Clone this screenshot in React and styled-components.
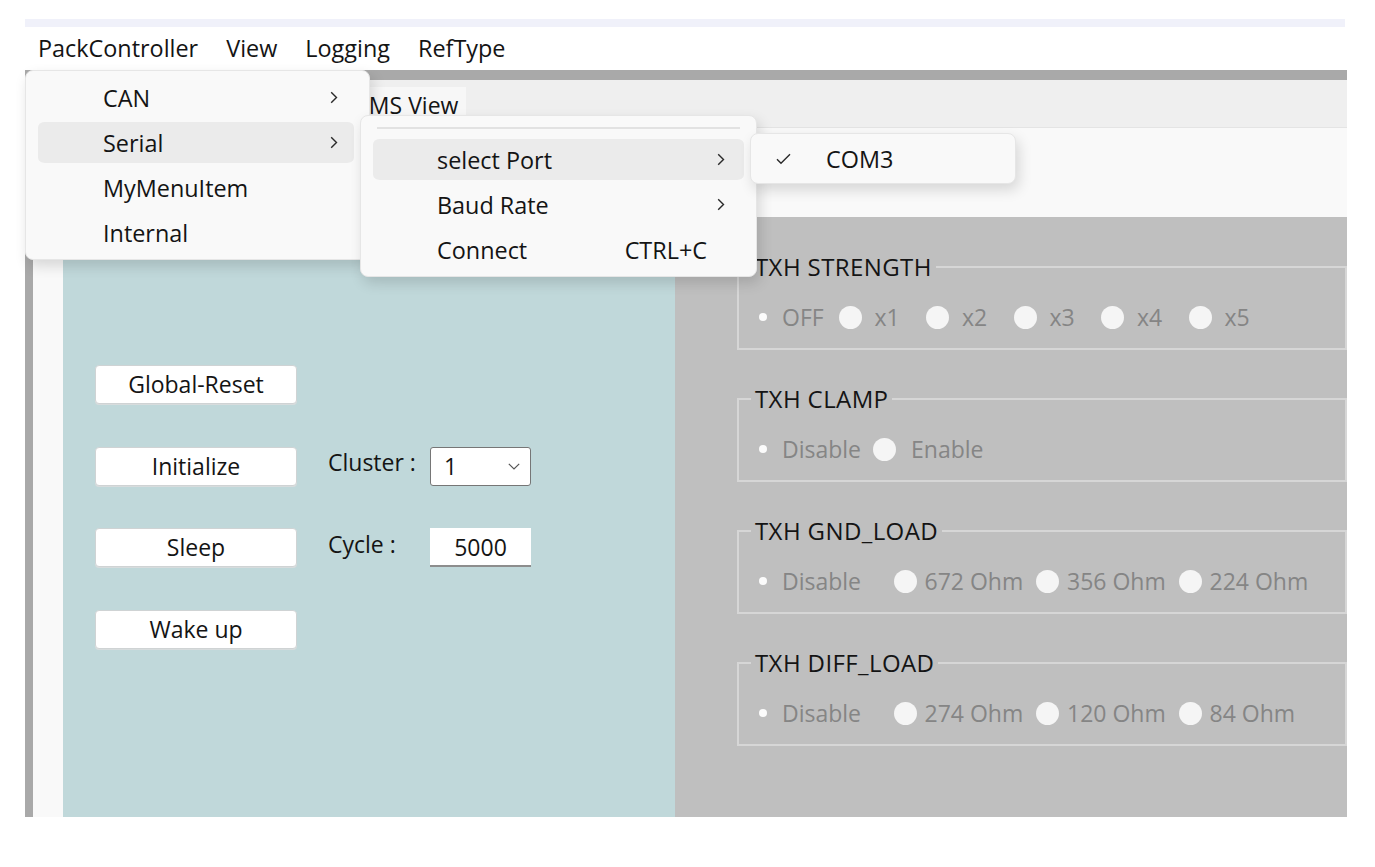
import React from 'react';
import styled, { createGlobalStyle } from 'styled-components';

const GlobalStyle = createGlobalStyle`
  html, body {
    margin: 0;
    padding: 0;
    background: #ffffff;
  }
  body {
    font-family: "Open Sans", "Noto Sans", "Liberation Sans", sans-serif;
    color: #141414;
  }
  * { box-sizing: border-box; }
`;

const Page = styled.div`
  width: 1375px;
  height: 867px;
  padding-top: 19px;
  overflow: hidden;
  background: #fff;
`;

const TopBand = styled.div`
  margin-left: 25px;
  width: 1320px;
  height: 8px;
  background: #f0f1fa;
`;

const Window = styled.div`
  position: relative;
  margin-left: 25px;
  width: 1322px;
`;

const MenuBar = styled.div`
  display: flex;
  align-items: center;
  height: 43px;
  background: #fff;
`;

const MenuTitle = styled.div`
  padding: 0 14px;
  font-size: 23.4px;
  line-height: 43px;
  &:first-child { padding-left: 13px; }
`;

const Frame = styled.div`
  border-top: 10px solid #a9a9a9;
  border-left: 8px solid #a9a9a9;
  background: #f9f9f9;
`;

const TabStrip = styled.div`
  display: flex;
  align-items: flex-end;
  height: 48px;
  padding-left: 315px;
  background: #efefef;
  border-bottom: 1px solid #e4e4e4;
`;

const Tab = styled.div`
  height: 40px;
  padding: 0 8px 0 6px;
  font-size: 23px;
  line-height: 36px;
  background: #f7f7f7;
`;

const TabPage = styled.div`
  padding: 89px 0 0 30px;
  background: #f9f9f9;
`;

const Body = styled.div`
  display: flex;
  height: 600px;
`;

const ControlPanel = styled.div`
  width: 612px;
  background: #c0d8da;
  padding: 148px 0 0 32px;
  display: flex;
  flex-direction: column;
  gap: 42.5px;
`;

const Row = styled.div`
  display: flex;
  align-items: center;
  height: 39px;
`;

const Button = styled.div`
  width: 202px;
  height: 39px;
  background: #fff;
  border: 1px solid #cfd3d4;
  border-radius: 4px;
  box-shadow: 0 1px 0 #d7dcdd;
  font-size: 23px;
  line-height: 36px;
  text-align: center;
`;

const Label = styled.div`
  width: 102px;
  margin-left: 31px;
  font-size: 23px;
  line-height: 30px;
  margin-top: -8px;
`;

const SelectBox = styled.div`
  display: flex;
  align-items: center;
  justify-content: space-between;
  width: 101px;
  height: 39px;
  padding: 0 10px 0 13px;
  background: #fff;
  border: 1px solid #767676;
  border-radius: 3px;
  font-size: 23px;
`;

const InputBox = styled.div`
  width: 101px;
  height: 39px;
  background: #fff;
  border-bottom: 2px solid #8d8d8d;
  font-size: 23px;
  line-height: 38px;
  text-align: center;
`;

const SettingsPanel = styled.div`
  flex: 1;
  background: #bfbfbf;
  padding: 35px 0 0 62px;
  overflow: hidden;
`;

const Group = styled.fieldset`
  margin: 0 0 34px 0;
  min-width: 0;
  padding: 22px 0 18px 12px;
  border: 2px solid #d6d6d6;
`;

const Legend = styled.legend`
  padding: 0 4px;
  font-size: 24px;
  line-height: 30px;
  letter-spacing: 0.4px;
  color: #141414;
`;

const Options = styled.div`
  display: flex;
  height: 26px;
`;

const Radio = styled.div`
  display: flex;
  align-items: center;
  flex: none;
  width: ${p => p.$width}px;
  font-size: 23px;
  color: #858585;
  white-space: nowrap;
`;

const Circle = styled.span`
  flex: none;
  display: flex;
  align-items: center;
  justify-content: center;
  width: 23px;
  height: 23px;
  margin-right: ${p => p.$gap}px;
  border-radius: 50%;
  background: ${p => (p.$checked ? 'transparent' : '#f5f5f5')};
  &::after {
    content: '';
    display: ${p => (p.$checked ? 'block' : 'none')};
    width: 8px;
    height: 8px;
    border-radius: 50%;
    background: #fbfbfb;
  }
`;

/* dropdown menus, drawn over the window */

const Dropdown = styled.div`
  position: absolute;
  left: ${p => p.$left}px;
  top: ${p => p.$top}px;
  width: ${p => p.$width}px;
  padding: ${p => p.$pad};
  background: #f9f9f9;
  border: 1px solid #e6e6e6;
  border-radius: 8px;
  box-shadow: 3px 6px 14px rgba(0, 0, 0, 0.14);
  z-index: ${p => p.$z};
`;

const MenuRule = styled.div`
  height: 2px;
  margin: 0 4px 8px;
  background: #e2e2e2;
`;

const MenuItem = styled.div`
  display: flex;
  align-items: center;
  height: 45px;
  padding: ${p => p.$pad};
  border-top: 2px solid transparent;
  border-bottom: 2px solid transparent;
  border-radius: 7px;
  background: ${p => (p.$active ? '#ebebeb' : 'transparent')};
  background-clip: padding-box;
  font-size: 23.4px;
  color: #141414;
`;

const ItemText = styled.span`
  flex: 1;
`;

const Shortcut = styled.span`
  margin-right: 7px;
`;

const Arrow = styled.span`
  display: flex;
  justify-content: center;
  width: 14px;
`;

const Check = styled.span`
  display: flex;
  width: 69px;
  padding-left: 19px;
`;

const Chevron = () => (
  <svg width="8" height="13" viewBox="0 0 8 13">
    <path d="M1.2 1.2 L6.5 6.5 L1.2 11.8" fill="none" stroke="#2a2a2a" strokeWidth="1.4" />
  </svg>
);

const DownChevron = () => (
  <svg width="12" height="7" viewBox="0 0 12 7">
    <path d="M0.8 0.8 L6 6 L11.2 0.8" fill="none" stroke="#555" strokeWidth="1.2" />
  </svg>
);

const Tick = () => (
  <svg width="15" height="12" viewBox="0 0 15 12">
    <path d="M1 6.3 L5 10.3 L14 1.2" fill="none" stroke="#2a2a2a" strokeWidth="1.4" />
  </svg>
);

const groups = [
  { title: 'TXH STRENGTH', width: 87.5, gap: 13, options: ['OFF', 'x1', 'x2', 'x3', 'x4', 'x5'] },
  { title: 'TXH CLAMP', width: 122, gap: 15, options: ['Disable', 'Enable'] },
  { title: 'TXH GND_LOAD', width: 142.5, gap: 8, options: ['Disable', '672 Ohm', '356 Ohm', '224 Ohm'] },
  { title: 'TXH DIFF_LOAD', width: 142.5, gap: 8, options: ['Disable', '274 Ohm', '120 Ohm', '84 Ohm'] },
];

export default function App() {
  return (
    <Page>
      <GlobalStyle />
      <TopBand />
      <Window>
        <MenuBar>
          <MenuTitle>PackController</MenuTitle>
          <MenuTitle>View</MenuTitle>
          <MenuTitle>Logging</MenuTitle>
          <MenuTitle>RefType</MenuTitle>
        </MenuBar>

        <Frame>
          <TabStrip>
            <Tab>BMS View</Tab>
          </TabStrip>
          <TabPage>
            <Body>
              <ControlPanel>
                <Row>
                  <Button>Global-Reset</Button>
                </Row>
                <Row>
                  <Button>Initialize</Button>
                  <Label>Cluster :</Label>
                  <SelectBox>
                    <span>1</span>
                    <DownChevron />
                  </SelectBox>
                </Row>
                <Row>
                  <Button>Sleep</Button>
                  <Label>Cycle :</Label>
                  <InputBox>5000</InputBox>
                </Row>
                <Row>
                  <Button>Wake up</Button>
                </Row>
              </ControlPanel>

              <SettingsPanel>
                {groups.map(g => (
                  <Group key={g.title}>
                    <Legend>{g.title}</Legend>
                    <Options>
                      {g.options.map((o, i) => (
                        <Radio key={o} $width={g.width}>
                          <Circle $checked={i === 0} $gap={i === 0 ? 8 : g.gap} />
                          {o}
                        </Radio>
                      ))}
                    </Options>
                  </Group>
                ))}
              </SettingsPanel>
            </Body>
          </TabPage>
        </Frame>

        <Dropdown $left={0} $top={43} $width={345} $pad="4px 15px 4px 12px" $z={3}>
          <MenuItem $pad="0 13px 0 65px">
            <ItemText>CAN</ItemText>
            <Arrow><Chevron /></Arrow>
          </MenuItem>
          <MenuItem $pad="0 13px 0 65px" $active>
            <ItemText>Serial</ItemText>
            <Arrow><Chevron /></Arrow>
          </MenuItem>
          <MenuItem $pad="0 13px 0 65px">
            <ItemText>MyMenuItem</ItemText>
          </MenuItem>
          <MenuItem $pad="0 13px 0 65px">
            <ItemText>Internal</ItemText>
          </MenuItem>
        </Dropdown>

        <Dropdown $left={335} $top={88} $width={397} $pad="11px 12px 4px" $z={4}>
          <MenuRule />
          <MenuItem $pad="0 16px 0 64px" $active>
            <ItemText>select Port</ItemText>
            <Arrow><Chevron /></Arrow>
          </MenuItem>
          <MenuItem $pad="0 16px 0 64px">
            <ItemText>Baud Rate</ItemText>
            <Arrow><Chevron /></Arrow>
          </MenuItem>
          <MenuItem $pad="0 16px 0 64px">
            <ItemText>Connect</ItemText>
            <Shortcut>CTRL+C</Shortcut>
            <Arrow />
          </MenuItem>
        </Dropdown>

        <Dropdown $left={725} $top={106} $width={266} $pad="2px 6px" $z={5}>
          <MenuItem $pad="0">
            <Check><Tick /></Check>
            <ItemText>COM3</ItemText>
          </MenuItem>
        </Dropdown>
      </Window>
    </Page>
  );
}
